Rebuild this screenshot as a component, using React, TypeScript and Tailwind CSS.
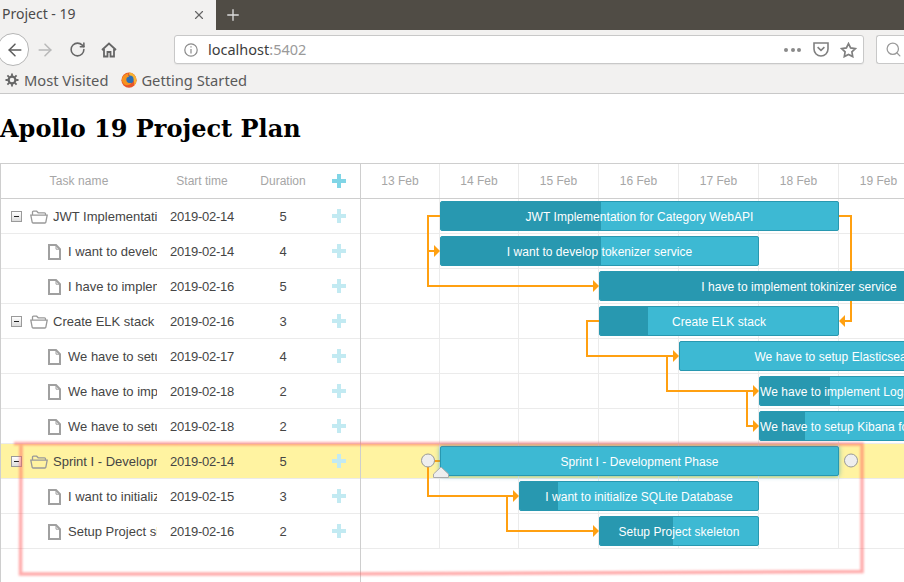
import { ArrowLeft, ArrowRight, RotateCw, X, Plus, Search } from "lucide-react";

const rows = [
  { kind: "parent", name: "JWT Implementation for Category WebAPI", start: "2019-02-14", dur: "5", hl: false },
  { kind: "child", name: "I want to develop tokenizer service", start: "2019-02-14", dur: "4", hl: false },
  { kind: "child", name: "I have to implement tokinizer service", start: "2019-02-16", dur: "5", hl: false },
  { kind: "parent", name: "Create ELK stack", start: "2019-02-16", dur: "3", hl: false },
  { kind: "child", name: "We have to setup Elasticsearch", start: "2019-02-17", dur: "4", hl: false },
  { kind: "child", name: "We have to implement Logstash", start: "2019-02-18", dur: "2", hl: false },
  { kind: "child", name: "We have to setup Kibana for", start: "2019-02-18", dur: "2", hl: false },
  { kind: "parent", name: "Sprint I - Development Phase", start: "2019-02-14", dur: "5", hl: true },
  { kind: "child", name: "I want to initialize SQLite Database", start: "2019-02-15", dur: "3", hl: false },
  { kind: "child", name: "Setup Project skeleton", start: "2019-02-16", dur: "2", hl: false },
];

const days = [
  { label: "13 Feb", w: "w-[79px]" },
  { label: "14 Feb", w: "w-[79px]" },
  { label: "15 Feb", w: "w-20" },
  { label: "16 Feb", w: "w-20" },
  { label: "17 Feb", w: "w-20" },
  { label: "18 Feb", w: "w-20" },
  { label: "19 Feb", w: "w-20" },
];

const bars = [
  { text: "JWT Implementation for Category WebAPI", pos: "left-[79px] top-[2px] w-[399px]", prog: "w-[160px]" },
  { text: "I want to develop tokenizer service", pos: "left-[79px] top-[37px] w-[319px]", prog: "w-[160px]" },
  { text: "I have to implement tokinizer service", pos: "left-[238px] top-[72px] w-[400px]", prog: "w-full" },
  { text: "Create ELK stack", pos: "left-[238px] top-[107px] w-[240px]", prog: "w-[48px]" },
  { text: "We have to setup Elasticsearch", pos: "left-[318px] top-[142px] w-[320px]", prog: "w-0" },
  { text: "We have to implement Logstash", pos: "left-[398px] top-[177px] w-[160px]", prog: "w-[70px]" },
  { text: "We have to setup Kibana for Logstash", pos: "left-[398px] top-[212px] w-[160px]", prog: "w-[45px]" },
  { text: "Sprint I - Development Phase", pos: "left-[79px] top-[247px] w-[399px] shadow-[0_0_5px_rgba(40,152,176,0.7)]", prog: "w-0" },
  { text: "I want to initialize SQLite Database", pos: "left-[158px] top-[282px] w-[240px]", prog: "w-[38px]" },
  { text: "Setup Project skeleton", pos: "left-[238px] top-[317px] w-[160px]", prog: "w-[73px]" },
];

function PlusMark({ strong }: { strong?: boolean }) {
  return (
    <svg width="14" height="14" viewBox="0 0 14 14" className={strong ? "text-[#80d5e6]" : "text-[#c2eaf2]"}>
      <path d="M5 0h4v5h5v4H9v5H5V9H0V5h5z" fill="currentColor" />
    </svg>
  );
}

function FolderIcon() {
  return (
    <svg width="18" height="14" viewBox="0 0 18 14" fill="none" stroke="#999999" strokeWidth="1.3" className="shrink-0">
      <path d="M2.5 5V2.2c0-.6.4-1 1-1h3.2l1.5 1.6h6.3c.6 0 1 .4 1 1V5" />
      <path d="M.8 5.2h16.4l-1.4 7.2c-.1.4-.4.6-.8.6H3c-.4 0-.7-.2-.8-.6z" />
    </svg>
  );
}

function FileIcon() {
  return (
    <svg width="13" height="16" viewBox="0 0 13 16" fill="none" stroke="#a0a0a0" strokeWidth="2" className="shrink-0">
      <path d="M1 1h7l4 4.2V15H1z" />
      <path d="M8 1v4.2h4" strokeWidth="1" />
    </svg>
  );
}

function FirefoxLogo() {
  return (
    <svg width="16" height="16" viewBox="0 0 16 16" className="shrink-0">
      <circle cx="8" cy="8.2" r="7.6" fill="#e8562a" />
      <path d="M8 .6a7.6 7.6 0 0 1 7.5 7.6c0 2-1 4-2.4 5.3C14 10 12 6 9.5 5.5 8.6 3.8 8 2.2 8 .6z" fill="#f9b233" />
      <circle cx="8.6" cy="7.6" r="4" fill="#2d6fb5" />
      <path d="M1.2 6C2.6 3 5 1.6 7.4 1.2 6.6 3 7 4 8.4 4.6 6 4.8 5 6.4 5.4 8.4c.5 2.2 3 3.2 5 2.4-1 2.4-5 3.4-7.4 1.4C1 10.6.6 8 1.2 6z" fill="#f7931e" />
    </svg>
  );
}

function Row({ r }: { r: (typeof rows)[number] }) {
  return (
    <div className={`flex h-[35px] border-b border-[#ebebeb] pt-[1px] text-[13px] text-[#454545] ${r.hl ? "bg-[#fff3a1]" : ""}`}>
      <div className="flex w-[156px] items-center">
        {r.kind === "parent" ? (
          <>
            <span className="ml-[10px] flex h-[11px] w-[11px] shrink-0 items-center justify-center border border-[#9a9a9a] bg-gradient-to-b from-white to-[#dcdcdc]">
              <span className="h-px w-[5px] bg-[#222]" />
            </span>
            <span className="ml-[8px]"><FolderIcon /></span>
            <span className="ml-[5px] min-w-0 flex-1 overflow-hidden whitespace-nowrap">{r.name}</span>
          </>
        ) : (
          <>
            <span className="ml-[47px]"><FileIcon /></span>
            <span className="ml-[7px] min-w-0 flex-1 overflow-hidden whitespace-nowrap">{r.name}</span>
          </>
        )}
      </div>
      <div className="flex w-[90px] items-center justify-center tracking-[-0.25px]">{r.start}</div>
      <div className="flex w-[72px] items-center justify-center">{r.dur}</div>
      <div className="-mt-[1px] flex w-[40px] items-center justify-center"><PlusMark /></div>
    </div>
  );
}

function Links() {
  const o = 361;
  const p = (pts: number[][]) => pts.map(([x, y]) => `${x - o},${y - 199}`).join(" ");
  const lines = [
    [[440, 216], [428, 216], [428, 286], [594, 286]],
    [[428, 251], [435, 251]],
    [[839, 216], [851, 216], [851, 321], [845, 321]],
    [[599, 321], [587, 321], [587, 356], [674, 356]],
    [[667, 356], [667, 391], [754, 391]],
    [[747, 391], [747, 426], [754, 426]],
    [[440, 461], [428, 461], [428, 496], [514, 496]],
    [[507, 496], [507, 531], [594, 531]],
  ];
  const heads = [
    [[434, 245], [440, 251], [434, 257]],
    [[593, 280], [599, 286], [593, 292]],
    [[845, 315], [839, 321], [845, 327]],
    [[673, 350], [679, 356], [673, 362]],
    [[753, 385], [759, 391], [753, 397]],
    [[753, 420], [759, 426], [753, 432]],
    [[513, 490], [519, 496], [513, 502]],
    [[593, 525], [599, 531], [593, 537]],
  ];
  return (
    <svg className="absolute left-0 top-0" width="543" height="350" fill="none">
      {lines.map((l, i) => (
        <polyline key={i} points={p(l)} stroke="#ffa011" strokeWidth="2" />
      ))}
      {heads.map((h, i) => (
        <polygon key={i} points={p(h)} fill="#ffa011" />
      ))}
    </svg>
  );
}

function Handles() {
  return (
    <svg className="absolute left-0 top-0" width="543" height="350" fill="none">
      <circle cx="67" cy="261.5" r="6.5" fill="#eeeeee" stroke="#999999" />
      <circle cx="490" cy="261.5" r="6.5" fill="#eeeeee" stroke="#999999" />
      <path d="M72.5 278.5V275l7-6.5h1l7 6.5v3.5z" fill="#eeeeee" stroke="#aaaaaa" />
    </svg>
  );
}

export default function App() {
  return (
    <div className="h-[582px] w-[904px] overflow-hidden bg-white font-['Liberation_Sans',sans-serif]">
      {/* browser chrome */}
      <div className="flex h-[30px] bg-[#504c45]">
        <div className="flex w-[216px] items-center bg-[#f2f1f0] pb-[3px] pl-[2px] font-['Noto_Sans',sans-serif] text-[14px] text-[#4a4a4a]">
          <span>Project - 19</span>
          <X className="ml-auto mr-[10px] mt-[2px] text-[#666]" size={14} strokeWidth={2} />
        </div>
        <div className="flex w-[34px] items-center justify-center">
          <Plus className="text-[#dcdcdc]" size={18} strokeWidth={1.8} />
        </div>
      </div>
      <div className="flex h-[35px] items-center bg-[#f2f1f0] pt-[4px]">
        <div className="relative -ml-[3px] flex h-[33px] w-[32px] shrink-0 items-center justify-center rounded-full border border-[#b5b5b5] bg-white">
          <ArrowLeft className="ml-[3px] text-[#5c5c5c]" size={20} strokeWidth={1.8} />
        </div>
        <ArrowRight className="ml-[6px] text-[#b8b8b8]" size={20} strokeWidth={1.8} />
        <RotateCw className="ml-[14px] text-[#666]" size={17} strokeWidth={2.2} />
        <svg width="16" height="16" viewBox="0 0 16 16" fill="none" stroke="#666" strokeWidth="1.8" className="ml-[15px]">
          <path d="M1 8l7-6.5L15 8M3 7v7.5h3.5V10h3v4.5H13V7" />
        </svg>
        <div className="ml-[57px] flex h-[29px] w-[690px] shrink-0 items-center rounded-[3px] border border-[#c8c8c8] bg-white shadow-[0_1px_1px_rgba(0,0,0,0.05)]">
          <svg width="14" height="14" viewBox="0 0 14 14" fill="none" stroke="#8a8a8a" strokeWidth="1.2" className="ml-[9px]">
            <circle cx="7" cy="7" r="6.2" />
            <path d="M7 6v4.5M7 3.2v1.4" />
          </svg>
          <span className="ml-[10px] font-['Noto_Sans',sans-serif] text-[14.5px] text-[#3d3d3d]">
            localhost<span className="text-[#9a9a9a]">:5402</span>
          </span>
          <div className="ml-auto flex items-center gap-[2.5px]">
            <span className="h-[4px] w-[4px] rounded-full bg-[#8a8a8a]" />
            <span className="h-[4px] w-[4px] rounded-full bg-[#8a8a8a]" />
            <span className="h-[4px] w-[4px] rounded-full bg-[#8a8a8a]" />
          </div>
          <svg width="16" height="15" viewBox="0 0 16 15" fill="none" stroke="#808080" strokeWidth="1.6" className="ml-[12px]">
            <path d="M1 1h14v6a7 7 0 0 1-14 0z" />
            <path d="M4.6 5.2L8 8.4l3.4-3.2" />
          </svg>
          <svg width="17" height="16" viewBox="0 0 17 16" fill="none" stroke="#808080" strokeWidth="1.7" className="ml-[11px] mr-[6px]">
            <path d="M8.5 1.6l2.1 4.3 4.7.7-3.4 3.3.8 4.7-4.2-2.2-4.2 2.2.8-4.7L1.7 6.6l4.7-.7z" />
          </svg>
        </div>
        <div className="ml-[12px] flex h-[29px] flex-1 items-center rounded-l-[3px] border border-r-0 border-[#c8c8c8] bg-white pl-[8px]">
          <Search className="text-[#9a9a9a]" size={17} strokeWidth={1.8} />
        </div>
      </div>
      <div className="flex h-[29px] items-center border-b border-[#c8c8c8] bg-[#f2f1f0] pt-[2px] font-['Noto_Sans',sans-serif] text-[14.7px] text-[#5a5a5a]">
        <svg width="14" height="14" viewBox="0 0 14 14" fill="none" stroke="#666" className="ml-[5px]">
          <circle cx="7" cy="7" r="3.4" strokeWidth="2.2" />
          <path d="M7 .5v2.4M7 11.1v2.4M.5 7h2.4M11.1 7h2.4M2.4 2.4l1.7 1.7M9.9 9.9l1.7 1.7M11.6 2.4L9.9 4.1M4.1 9.9l-1.7 1.7" strokeWidth="1.8" />
        </svg>
        <span className="ml-[5px]">Most Visited</span>
        <span className="ml-[13px]"><FirefoxLogo /></span>
        <span className="ml-[4px]">Getting Started</span>
      </div>

      {/* page */}
      <h1 className="h-[69px] pt-[20px] font-['DejaVu_Serif',serif] text-[24px] font-bold leading-[30px] text-black">
        Apollo 19 Project Plan
      </h1>

      {/* gantt */}
      <div className="relative flex h-[419px] w-[920px] border-l border-t border-[#cecece]">
        <div className="w-[359px] shrink-0">
          <div className="flex h-[35px] border-b border-[#cecece] text-[12px] text-[#a6a6a6]">
            <div className="flex w-[156px] items-center justify-center tracking-[0.1px]">Task name</div>
            <div className="flex w-[90px] items-center justify-center">Start time</div>
            <div className="flex w-[72px] items-center justify-center">Duration</div>
            <div className="flex w-[40px] items-center justify-center"><PlusMark strong /></div>
          </div>
          {rows.map((r, i) => (
            <Row key={i} r={r} />
          ))}
        </div>
        <div className="w-[561px] shrink-0 border-l border-[#cecece]">
          <div className="flex h-[35px] border-b border-[#cecece] text-[12px] text-[#a6a6a6]">
            {days.map((d) => (
              <div key={d.label} className={`flex ${d.w} shrink-0 items-center justify-center border-r border-[#ebebeb]`}>
                {d.label}
              </div>
            ))}
          </div>
          <div className="relative">
            {rows.map((r, i) => (
              <div key={i} className={`flex h-[35px] border-b border-[#ebebeb] ${r.hl ? "bg-[#fff3a1]" : ""}`}>
                {days.map((d) => (
                  <div key={d.label} className={`${d.w} shrink-0 border-r border-[#ebebeb]`} />
                ))}
              </div>
            ))}
            <Links />
            {bars.map((b) => (
              <div
                key={b.text}
                className={`absolute h-[30px] overflow-hidden rounded-[2px] border border-[#2898b0] bg-[#3db9d3] ${b.pos}`}
              >
                <div className={`absolute inset-y-0 left-0 bg-[#2898b0] ${b.prog}`} />
                <div className="relative overflow-hidden whitespace-nowrap text-center text-[12px] leading-[31px] tracking-[0.04px] text-white">{b.text}</div>
              </div>
            ))}
            <Handles />
          </div>
        </div>
      </div>

      {/* hand drawn annotation */}
      <svg className="absolute left-0 top-0 blur-[0.8px]" width="904" height="582" fill="none">
        <path
          d="M14 443.5C200 445 500 443 862 444L862 571.5C600 573 300 575 20.5 574L21 444"
          stroke="#ff5a5a"
          strokeOpacity="0.5"
          strokeWidth="3.5"
        />
      </svg>
    </div>
  );
}
